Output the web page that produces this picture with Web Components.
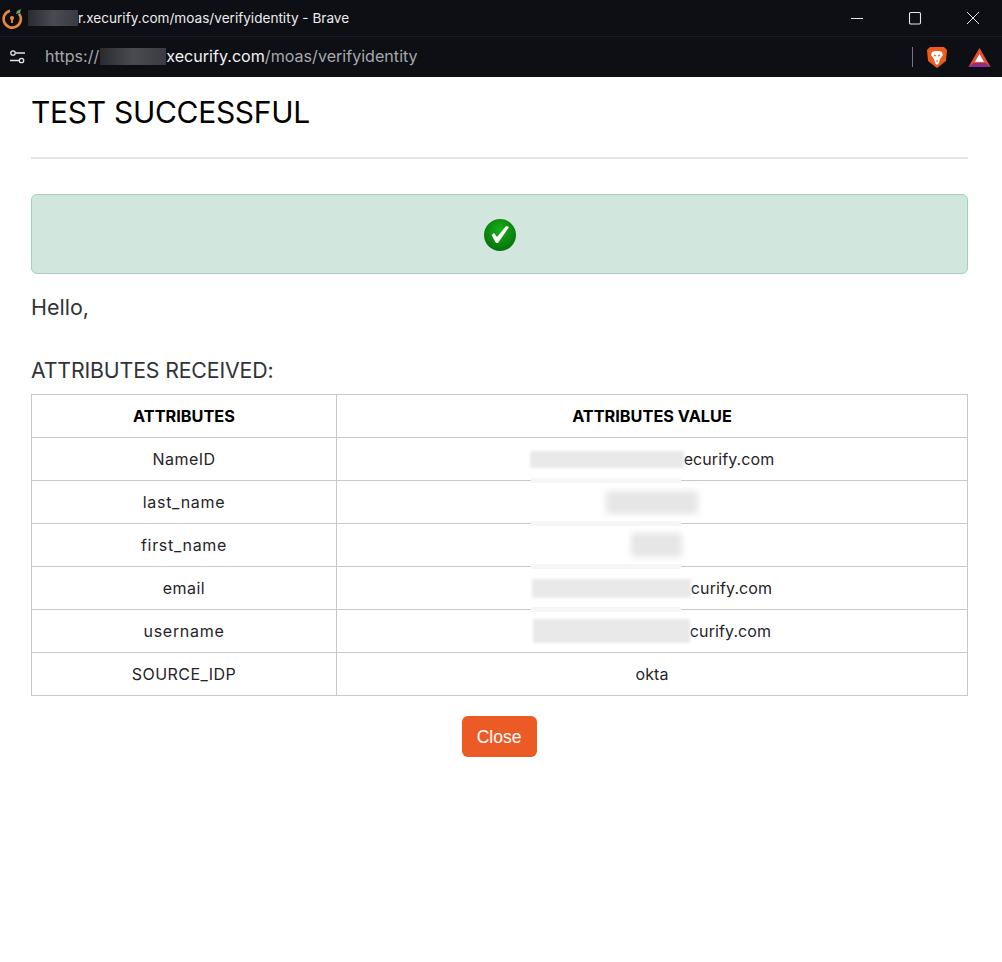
<!DOCTYPE html>
<html lang="en"><head><meta charset="utf-8"><title>Test</title>
<style>
html,body{margin:0;padding:0;background:#fff;height:100%}
body{font-family:"Inter","Liberation Sans",sans-serif;width:1002px;height:962px;overflow:hidden;display:flex;flex-direction:column}
</style></head><body>
<browser-chrome></browser-chrome>
<result-page>
  <page-heading>TEST SUCCESSFUL</page-heading>
  <success-banner></success-banner>
  <p slot="hello">Hello,</p>
  <attr-table slot="table">
    <attr-row head name="ATTRIBUTES">ATTRIBUTES VALUE</attr-row>
    <attr-row name="NameID" strip><redact-mask w="154" h="17"></redact-mask>ecurify.com</attr-row>
    <attr-row name="last_name" strip wide><redact-mask soft w="92" h="23"></redact-mask></attr-row>
    <attr-row name="first_name" strip wide><redact-mask soft w="51" h="24" x="8"></redact-mask></attr-row>
    <attr-row name="email" strip><redact-mask w="159" h="19"></redact-mask>curify.com</attr-row>
    <attr-row name="username" wide><redact-mask w="157" h="24"></redact-mask>curify.com</attr-row>
    <attr-row name="SOURCE_IDP">okta</attr-row>
  </attr-table>
  <close-button slot="action">Close</close-button>
</result-page>
<script>
const def=(name,html,extra)=>customElements.define(name,class extends HTMLElement{
  constructor(){super();this.attachShadow({mode:'open'}).innerHTML=html;}
  connectedCallback(){extra&&extra(this);}
});
def('browser-chrome',`<style>
:host{display:block;height:77px;background:#0e0f14;color:#fff;font-family:"Inter","Liberation Sans",sans-serif;flex:none}
.title{height:36px;display:flex;align-items:center;border-bottom:1px solid #1b1c21;padding-left:2px;font-size:13.6px;color:#ececee;line-height:34px}
.title svg.fav{flex:none;margin-right:5px}
.blur{display:inline-block;background:linear-gradient(90deg,#2a2b30,#4a4b50 50%,#3a3b40);filter:blur(.6px)}
.t1{width:50px;height:16px;flex:none}
.ctl{margin-left:auto;display:flex;align-items:center;height:100%}
.ctl span{width:58px;display:flex;justify-content:center}
.addr{height:40px;display:flex;align-items:center;font-size:16.1px;color:#a6a8ac;padding-left:9px;line-height:38px}
.addr .t2{width:66px;height:17px;margin:0 0 -1px 1px}
.url{margin-left:19px;display:flex;align-items:center;margin-top:-2px}
.url b{font-weight:400;color:#f2f2f2}
.right{margin-left:auto;display:flex;align-items:center;padding-right:11px}
.sep{width:1px;height:20px;background:#77787c;margin-right:13px}
</style>
<div class="title">
<svg class="fav" width="21" height="22" viewBox="0 0 21 22"><path d="M8 3.7a8.6 8.6 0 1 0 9 3" fill="none" stroke="#e98a3a" stroke-width="2.6"/><circle cx="10" cy="11" r="2.1" fill="#e98a3a"/><rect x="9.1" y="11" width="1.8" height="5" fill="#e98a3a"/><path d="M14 7l1-3 4-2-1 4z" fill="#5fb14b"/></svg>
<span class="blur t1"></span><span>r.xecurify.com/moas/verifyidentity - Brave</span>
<div class="ctl">
<span><svg width="14" height="14" viewBox="0 0 14 14"><path d="M1 7.5h12" stroke="#e6e6e6" stroke-width="1"/></svg></span>
<span><svg width="14" height="14" viewBox="0 0 14 14"><rect x="1.5" y="1.5" width="11" height="11.5" rx="1.2" fill="none" stroke="#e6e6e6" stroke-width="1.1"/></svg></span>
<span><svg width="14" height="14" viewBox="0 0 14 14"><path d="M1 1l12 12M13 1L1 13" stroke="#e6e6e6" stroke-width="1"/></svg></span>
</div></div>
<div class="addr">
<svg width="17" height="16" viewBox="0 0 17 16" fill="none" stroke="#e4e4e4" stroke-width="1.3"><circle cx="4" cy="4" r="2.2"/><path d="M6.5 4H16M1 11.5h9"/><circle cx="12.5" cy="11.5" r="2.2"/></svg>
<div class="url"><span>https://</span><span class="blur t2"></span><b>xecurify.com</b><span>/moas/verifyidentity</span></div>
<div class="right"><i class="sep"></i>
<svg width="22" height="24" viewBox="0 0 22 24" style="margin-right:20px"><path d="M4 2h14l3 3-1 11-9 7-9-7L1 5z" fill="#ef5a1e"/><path d="M6 7l3-1h4l3 1 1 3-3 4-1 4-2 2-2-2-1-4-3-4z" fill="#fff"/><path d="M8 10l2 1M14 10l-2 1M10 16h2" stroke="#ef5a1e" stroke-width="1.2"/></svg>
<svg width="23" height="20" viewBox="0 0 23 20"><path d="M11.5 1L22.5 20H.5z" fill="#e8502f"/><path d="M.5 20l5-4h12l5 4z" fill="#8c2d8f"/><path d="M11.5 7l4.5 8h-9z" fill="#fff"/></svg>
</div></div>`);
def('result-page',`<style>
:host{display:block;padding:0 34px 0 31px;flex:1;color:#2f3438;font-family:"Inter","Liberation Sans",sans-serif}
.hello{margin-top:21px;font-size:21.5px;line-height:24px;height:24px}
::slotted(p){margin:0;font:inherit}
h3{margin:39px 0 0;font-weight:400;font-size:21.3px;line-height:24px;letter-spacing:-.15px}
.table{margin-top:12px}
.act{display:flex;justify-content:center;margin-top:20px;padding-right:1px}
</style>
<slot></slot>
<div class="hello"><slot name="hello"></slot></div>
<h3>ATTRIBUTES RECEIVED:</h3>
<div class="table"><slot name="table"></slot></div>
<div class="act"><slot name="action"></slot></div>`);
def('page-heading',`<style>
:host{display:block;height:80px;border-bottom:2px solid #e4e4e4;box-sizing:content-box;color:#000}
h1{margin:0;padding-top:16px;font-weight:400;font-size:30px;line-height:38px;letter-spacing:-.3px}
</style><h1><slot></slot></h1>`);
def('success-banner',`<style>
:host{display:flex;justify-content:center;align-items:center;height:78px;margin-top:35px;background:#d1e7dd;border:1px solid #a3cfbb;border-radius:6px}
svg{margin-top:1px}
</style>
<svg width="34" height="34" viewBox="0 0 34 34"><defs><radialGradient id="g" cx=".5" cy=".35" r=".7"><stop offset="0" stop-color="#18b018"/><stop offset="1" stop-color="#056b0a"/></radialGradient></defs><circle cx="17" cy="17" r="16" fill="url(#g)"/><path d="M8.5 17l2.5-2 3 4 9-11 3 1-11 16h-2z" fill="#fff"/></svg>`);
def('attr-table',`<style>
:host{display:block;border:1px solid #c8c8c8;border-bottom:none;font-size:16px;color:#1f2429}
</style><slot></slot>`);
def('attr-row',`<style>
:host{display:grid;grid-template-columns:305px 1fr;height:43px;box-sizing:border-box;border-bottom:1px solid #c8c8c8;position:relative;text-align:center;line-height:42px;font-size:16px}
:host([head]){font-weight:700;font-size:16.3px;color:#000}
.n{border-right:1px solid #c8c8c8;letter-spacing:.45px}
:host([wide]) .n{letter-spacing:.7px}
:host([head]) .n{letter-spacing:0}
.v{display:flex;justify-content:center;align-items:center;letter-spacing:.1px}
:host([head]) .v{letter-spacing:0}
.strip{position:absolute;left:499px;width:150px;height:5px;bottom:-3px;background:#f6f6f6;display:none}
:host([strip]) .strip{display:block}
</style><div class="n"></div><div class="v"><slot></slot></div><i class="strip"></i>`,
el=>{el.shadowRoot.querySelector('.n').textContent=el.getAttribute('name');});
def('redact-mask',`<style>
:host{display:inline-block;background:#e9e9e9;filter:blur(1.5px);border-radius:2px}
:host([soft]){background:#e6e6e6;filter:blur(3px)}
</style>`,el=>{el.style.width=el.getAttribute('w')+'px';el.style.height=el.getAttribute('h')+'px';if(el.hasAttribute('x'))el.style.marginLeft=el.getAttribute('x')+'px';});
def('close-button',`<style>
:host{display:inline-flex;align-items:center;justify-content:center;width:75px;height:41px;border-radius:6px;background:#ec5a26;color:#fff;font-size:17.5px;font-family:"Liberation Sans",sans-serif;padding-top:2px;box-sizing:border-box}
</style><slot></slot>`);
</script>
</body></html>
